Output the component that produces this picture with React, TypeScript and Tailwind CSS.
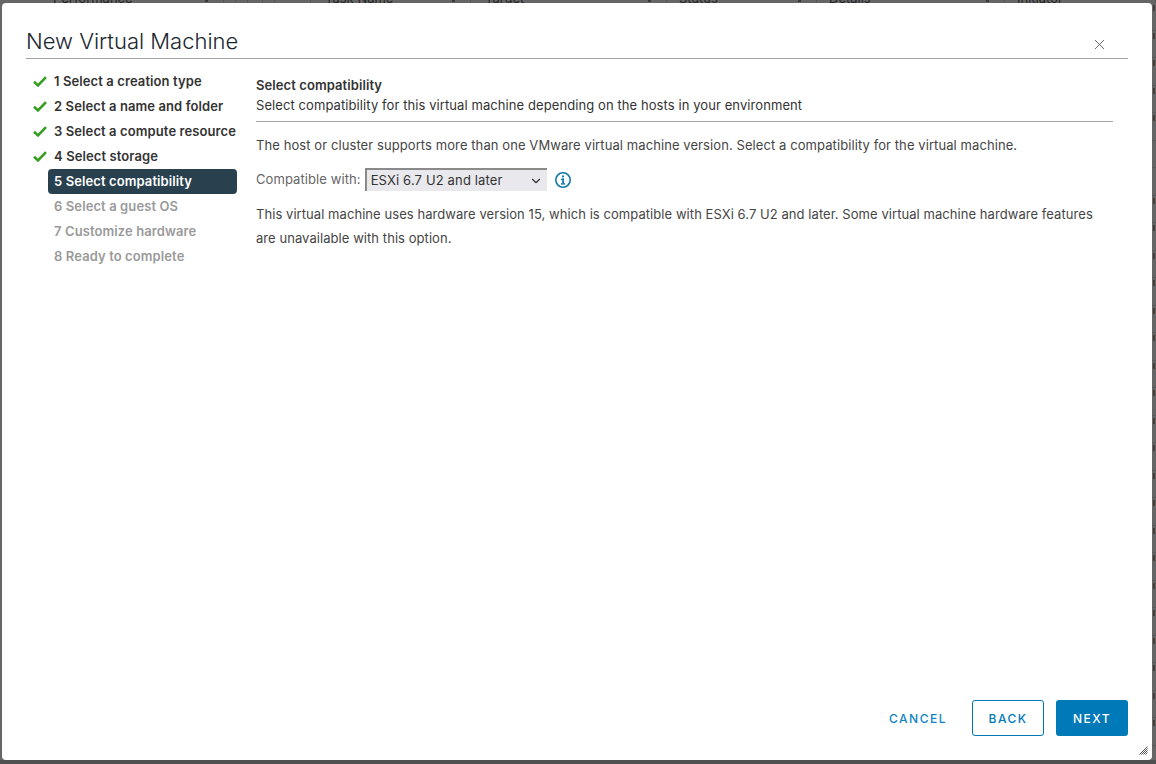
import { ChevronDown, X } from "lucide-react";

const steps = [
  { label: "1 Select a creation type", state: "done" },
  { label: "2 Select a name and folder", state: "done" },
  { label: "3 Select a compute resource", state: "done" },
  { label: "4 Select storage", state: "done" },
  { label: "5 Select compatibility", state: "active" },
  { label: "6 Select a guest OS", state: "todo" },
  { label: "7 Customize hardware", state: "todo" },
  { label: "8 Ready to complete", state: "todo" },
];

// columns of the table behind the modal, only their lower edge peeks out
const backgroundColumns = [
  { width: "w-[224px]", pad: "pl-[53px]", text: "Performance", sort: true },
  { width: "w-[12px]", pad: "", text: "", sort: false },
  { width: "w-[12px]", pad: "", text: "", sort: false },
  { width: "w-[15px]", pad: "", text: "", sort: false },
  { width: "w-[12px]", pad: "", text: "", sort: false },
  { width: "w-[36px]", pad: "", text: "", sort: false },
  { width: "w-[160px]", pad: "pl-[14px]", text: "Task Name", sort: true },
  { width: "w-[196px]", pad: "pl-[14px]", text: "Target", sort: true },
  { width: "w-[150px]", pad: "pl-[12px]", text: "Status", sort: true },
  { width: "w-[188px]", pad: "pl-[12px]", text: "Details", sort: true },
  { width: "w-[151px]", pad: "pl-[12px]", text: "Initiator", sort: false },
];

const sideRows = Array.from({ length: 27 }, (_, i) => i !== 5 && i !== 6);

const StepItem = ({ label, state }: { label: string; state: string }) => {
  return (
    <li className="flex h-[25px] items-center">
      <span className="flex w-[15px] shrink-0 items-center">
        {state === "done" && (
          <svg width="14" height="11" viewBox="0 0 14 11" fill="none">
            <path d="M1 5.8 L5 9.4 L13 1.2" stroke="#349e1f" strokeWidth="2.6" />
          </svg>
        )}
      </span>
      {state === "active" ? (
        <span className="flex h-[25px] w-[189px] items-center rounded-[4px] bg-[#29414e] pl-[6px] text-white">
          {label}
        </span>
      ) : (
        <span className={state === "done" ? "pl-[6px] text-[#333333]" : "pl-[6px] text-[#9a9a9a]"}>
          {label}
        </span>
      )}
    </li>
  );
};

const BackgroundStrip = () => (
  <div className="flex h-[3px] overflow-hidden bg-[#666666] text-[13px] leading-[0px] text-[#262626]">
    {backgroundColumns.map((c, i) => (
      <div key={i} className={`flex h-[3px] shrink-0 items-start border-r border-[#565656] ${c.width} ${c.pad}`}>
        {c.text && <span className="-mt-[2px] whitespace-nowrap">{c.text}</span>}
        {c.sort && <span className="mt-0 mr-[15px] ml-auto h-[2px] w-[3px] bg-[#3a3a3a]" />}
      </div>
    ))}
  </div>
);

const SideStrip = () => (
  <div className="flex w-[4px] flex-col overflow-hidden bg-[#666666]">
    {sideRows.map((mark, i) => (
      <div key={i} className="h-[27.5px] shrink-0 border-b border-[#5a5a5a] pt-[2px] pl-[1px]">
        {mark && <div className="h-[6px] w-[2px] bg-[#453f3a]" />}
      </div>
    ))}
  </div>
);

export default function App() {
  return (
    <div className="flex h-[764px] w-[1156px] flex-col overflow-hidden bg-[#666666] font-['Inter',sans-serif]">
      <BackgroundStrip />
      <div className="flex h-[757px]">
        <div className="relative ml-[2px] flex w-[1150px] flex-col rounded-[4px] bg-white px-[24px]">
          <header className="flex h-[56px] items-end justify-between border-b border-[#a3a3a3] pb-[2px]">
            <h1 className="text-[22px] leading-[30px] font-light text-[#1a2630]">New Virtual Machine</h1>
            <X size={17} strokeWidth={1.1} className="mr-[20px] mb-[3px] text-[#444444]" />
          </header>
          <div className="flex flex-1">
            <ol className="mt-[10px] w-[230px] pl-[7px] text-[13px] font-semibold tracking-[0.1px]">
              {steps.map((s) => (
                <StepItem key={s.label} label={s.label} state={s.state} />
              ))}
            </ol>
            <main className="mr-[15px] flex-1 text-[13px] tracking-[0.085px] text-[#454545]">
              <div className="border-b border-[#a3a3a3] pt-[16px] pb-[5px]">
                <h2 className="leading-[20px] font-semibold text-[#333333]">Select compatibility</h2>
                <p className="leading-[21px] text-[#333333]">
                  Select compatibility for this virtual machine depending on the hosts in your environment
                </p>
              </div>
              <p className="mt-[13px] leading-[20px]">
                The host or cluster supports more than one VMware virtual machine version. Select a compatibility for the virtual machine.
              </p>
              <div className="mt-[13px] flex items-center">
                <span className="text-[#666666]">Compatible with:</span>
                <div className="ml-[4px] flex h-[23px] w-[182px] items-center justify-between border-t-2 border-l-2 border-t-[#8a8a8a] border-l-[#8a8a8a] bg-[#e9e9ed] pr-[4px] pl-[4px] tracking-[0.15px] text-[#333333]">
                  <span>ESXi 6.7 U2 and later</span>
                  <ChevronDown size={14} strokeWidth={2} />
                </div>
                <svg width="18" height="18" viewBox="0 0 18 18" className="ml-[7px]" fill="none">
                  <circle cx="9" cy="9" r="7.2" stroke="#0f79ad" strokeWidth="1.6" />
                  <rect x="7" y="7.6" width="3" height="1.4" fill="#0f79ad" />
                  <rect x="8.2" y="7.6" width="1.8" height="5" fill="#0f79ad" />
                  <rect x="7" y="12.2" width="4.2" height="1.4" fill="#0f79ad" />
                  <circle cx="9" cy="5.4" r="1.1" fill="#0f79ad" />
                </svg>
              </div>
              <p className="mt-[11px] leading-[24px] tracking-[0.06px]">
                This virtual machine uses hardware version 15, which is compatible with ESXi 6.7 U2 and later. Some virtual machine hardware features are unavailable with this option.
              </p>
            </main>
          </div>
          <footer className="mb-[24px] flex items-center justify-end text-[12px] font-medium tracking-[1.5px]">
            <button className="mr-[25px] pt-[2px] text-[#0f84c4]">CANCEL</button>
            <button className="mr-[12px] h-[36px] w-[72px] rounded-[3px] border border-[#0079b8] bg-white pt-[2px] text-[#0079b8]">BACK</button>
            <button className="h-[36px] w-[72px] rounded-[3px] bg-[#0079b8] pt-[2px] text-white">NEXT</button>
          </footer>
          <svg width="9" height="9" viewBox="0 0 9 9" className="absolute right-[4px] bottom-[5px]" fill="none" stroke="#555555" strokeWidth="1">
            <path d="M0.5 8.5 L8.5 0.5" />
            <path d="M2.5 8.5 L8.5 2.5" />
            <path d="M4.5 8.5 L8.5 4.5" />
            <path d="M6.5 8.5 L8.5 6.5" />
          </svg>
        </div>
        <SideStrip />
      </div>
      <div className="h-[4px] bg-[#505050]" />
    </div>
  );
}
